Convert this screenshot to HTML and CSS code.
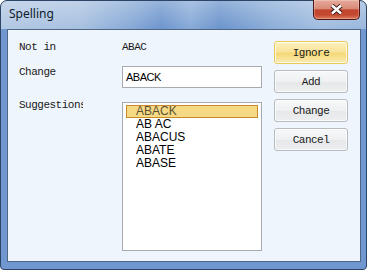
FILE: index.html
```html
<!DOCTYPE html>
<html lang="en">
<head>
    <meta charset="UTF-8">
    <title>Spelling</title>
    <link rel="stylesheet" href="styles.css">
</head>
<body>
<div class="window">
    <div class="titlebar">
        <span class="title">Spelling</span>
        <button class="close" type="button" aria-label="Close">
            <svg width="13" height="11" viewBox="0 0 13 11">
                <path d="M2 1.5 L11 9.5 M11 1.5 L2 9.5" stroke="#3b1c1a" stroke-width="4.4" fill="none"/>
                <path d="M2 1.5 L11 9.5 M11 1.5 L2 9.5" stroke="#fff" stroke-width="2.4" fill="none"/>
            </svg>
        </button>
    </div>

    <div class="client">
        <!-- word fields -->
        <div class="fields">
            <div class="label">Not in</div>
            <div class="value">ABAC</div>

            <div class="label">Change</div>
            <div><input class="change-input" type="text" value="ABACK"></div>

            <div class="label label-clip">Suggestions</div>
            <ul class="suggestions">
                <li class="selected">ABACK</li>
                <li>AB AC</li>
                <li>ABACUS</li>
                <li>ABATE</li>
                <li>ABASE</li>
            </ul>
        </div>

        <!-- dialog buttons -->
        <div class="actions">
            <button class="btn btn-default" type="button">Ignore</button>
            <button class="btn" type="button">Add</button>
            <button class="btn" type="button">Change</button>
            <button class="btn" type="button">Cancel</button>
        </div>
    </div>
</div>
</body>
</html>
```

FILE: styles.css
```css
body { margin: 0; padding: 0; background: #fff; }

.window {
    width: 367px; height: 270px; box-sizing: border-box;
    border: 1px solid #2c4566; border-radius: 7px 7px 4px 4px;
    padding: 0 5px 7px 6px;
    display: flex; flex-direction: column;
    background:
        linear-gradient(180deg, rgba(255,255,255,.28) 0, rgba(255,255,255,0) 28px) top / 100% 28px no-repeat,
        linear-gradient(90deg, #b2c8e4 0%, #a7c0e0 22%, #86a8d6 36%, #6d95cd 44%, #87aad7 52%, #6b94cc 60%, #8badd8 74%, #a2bde0 88%, #9ab7dc 100%) top / 100% 28px no-repeat,
        #7097cf;
}

.titlebar { height: 28px; display: flex; justify-content: space-between; align-items: flex-start; }
.title { font-family: "Noto Sans", sans-serif; font-size: 12px; line-height: 16px; color: #0f1b2b; padding: 5px 0 0 2px; }

.close {
    width: 47px; height: 20px; margin: -1px 1px 0 0; padding: 0;
    border: 1px solid #4a1712; border-top: none; border-radius: 0 0 5px 5px;
    background: linear-gradient(180deg, #e6aa9b 0%, #d98b78 45%, #c24630 52%, #c4472f 78%, #dc7d5f 100%);
    display: flex; align-items: center; justify-content: center;
    box-shadow: inset 0 0 0 1px rgba(255,255,255,.25);
}

.client {
    flex: 1; border: 1px solid #4f6685; background: #eff5fc;
    padding: 11px 0 0 11px;
    display: flex; align-items: flex-start;
}

.fields {
    display: grid; grid-template-columns: 103px 140px; grid-template-rows: 25px 36px 149px;
    font-family: "Liberation Mono", monospace; font-size: 11px; letter-spacing: -0.5px; line-height: 12px; color: #1a1a1a;
}
.label { white-space: nowrap; }
.label-clip { width: 64px; overflow: hidden; margin-top: -3px; }

.change-input {
    width: 140px; height: 22px; box-sizing: border-box; margin: 0;
    border: 1px solid #a7abb0; background: #fff; padding: 0 3px;
    font-family: "Liberation Sans", sans-serif; font-size: 11px; letter-spacing: -0.5px; color: #000;
}

.suggestions {
    margin: 0; padding: 2px 3px; list-style: none; box-sizing: border-box;
    width: 140px; height: 149px; border: 1px solid #a7abb0; background: #fff;
    font-family: "Liberation Sans", sans-serif; font-size: 12px; line-height: 11px; letter-spacing: 0; color: #000;
}
.suggestions li { height: 13px; box-sizing: border-box; border: 1px solid transparent; padding-left: 9px; }
.suggestions li.selected { background: #f6d985; border-color: #c98a2e; color: #5d5334; }

.actions { margin-left: 12px; display: flex; flex-direction: column; gap: 6px; }
.btn {
    width: 74px; height: 23px; padding: 0; border: 1px solid #b7bbc0; border-radius: 3px;
    background: linear-gradient(180deg, #f7f8f9 0%, #eff0f1 50%, #e6e7e9 52%, #eceef0 100%);
    font-family: "Liberation Mono", monospace; font-size: 11px; letter-spacing: -0.5px; color: #1a1a1a;
    box-shadow: inset 0 0 0 1px rgba(255,255,255,.7);
}
.btn-default {
    border-color: #e8c95a;
    background: linear-gradient(180deg, #fdf1bd 0%, #f9e39a 45%, #f5d877 55%, #fbebb4 100%);
}
```
